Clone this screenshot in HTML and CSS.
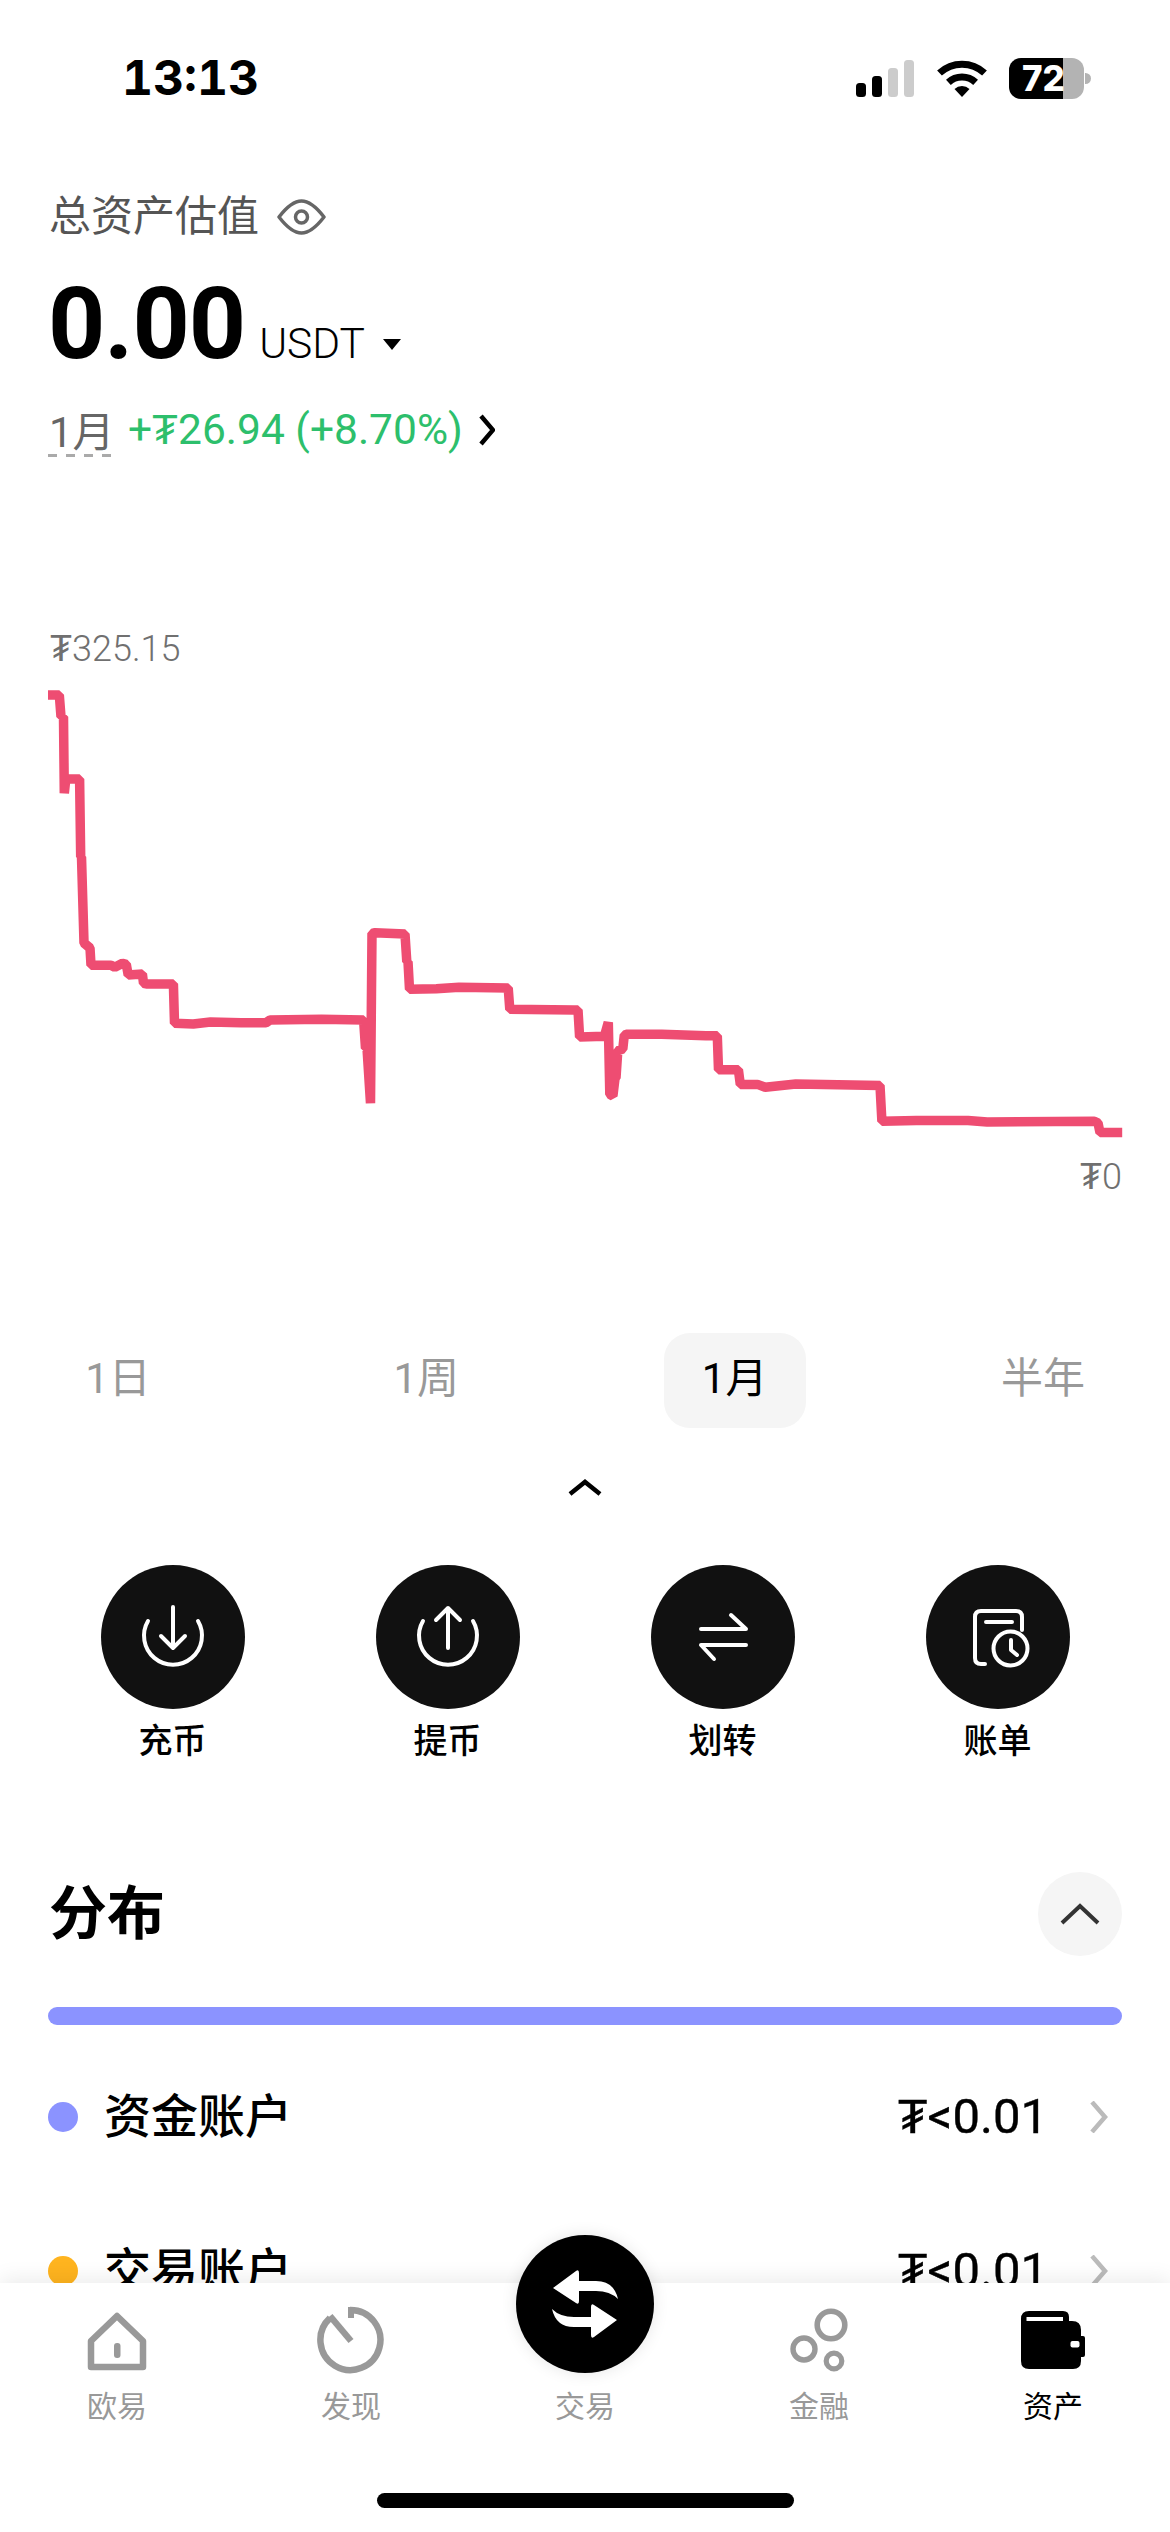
FILE: index.html
```html
<!DOCTYPE html>
<html lang="zh">
<head>
<meta charset="utf-8">
<title>资产</title>
<link rel="stylesheet" href="styles.css">
</head>
<body>
<div class="phone">
  <header class="status">
    <span class="time">13:13</span>
    <div class="status-icons">
      <svg class="signal" width="58" height="37" viewBox="856 59 58 37"><rect x="856" y="82" width="10" height="14" rx="3.5" fill="#000"/><rect x="872" y="75" width="10" height="21" rx="3.5" fill="#000"/><rect x="888" y="67" width="10" height="29" rx="3.5" fill="#ccc"/><rect x="904" y="59" width="10" height="37" rx="3.5" fill="#ccc"/></svg>
      <svg class="wifi" width="50" height="37" viewBox="937 59 50 37"><path d="M939.5 72A33 33 0 0 1 984.5 72M948.4 81.4A20 20 0 0 1 975.6 81.4" fill="none" stroke="#000" stroke-width="7"/><path d="M962 96L954.5 88A11 11 0 0 1 969.5 88Z" fill="#000"/></svg>
      <div class="battery"><span class="battery-level">72</span><i class="battery-nub"></i></div>
    </div>
  </header>

  <section class="summary">
    <div class="total-label">
      <span>总资产估值</span>
      <svg width="50" height="38" viewBox="276 200 50 38"><path d="M278 219C288 206 295 203 300.5 203C306 203 313 206 323 219C313 232 306 235 300.5 235C295 235 288 232 278 219Z" fill="none" stroke="#666" stroke-width="3.5" stroke-linejoin="round"/><circle cx="300.5" cy="219" r="6" fill="none" stroke="#666" stroke-width="3.5"/></svg>
    </div>
    <div class="amount">
      <span class="amount-value">0.00</span>
      <span class="amount-unit">USDT</span>
      <i class="caret"></i>
    </div>
    <div class="change">
      <span class="change-period">1月</span>
      <span class="change-value">+₮26.94 (+8.70%)</span>
      <svg width="16" height="32" viewBox="478 418 16 32"><path d="M480 420L492 434L480 448" fill="none" stroke="#000" stroke-width="4.5"/></svg>
    </div>
  </section>

  <section class="chart">
    <div class="chart-max">₮325.15</div>
    <svg class="chart-line" width="1170" height="480" viewBox="0 672 1170 480"><polyline fill="none" stroke="#ee4d72" stroke-width="9.5" stroke-linejoin="bevel" points="48,695 59.3,695 61,716.7 63.5,716.7 64.3,793.3 65.8,779 79.6,779 80.7,857 81.5,857 84,943 90,948 91,965.3 111,965.3 114.8,967.3 122.5,963.3 126.3,964.3 128.2,975 142.4,974 143.5,983.3 147.3,984 173.4,984 174.5,1023.3 193.3,1024 210.5,1022 241,1022.7 266,1022.7 270,1020 321.5,1019.3 363.6,1020 365.5,1048.3 367,1048.3 370.5,1103.3 372,933.3 375,932.7 405,934 406.8,961.7 408,961.7 409.5,989.3 436.3,988.7 459,987.3 508.2,988 509.8,1009.3 574,1010 578,1010 579.6,1037 604.4,1036.2 608.3,1022.4 609.8,1094.3 612.9,1096 615,1078.5 616,1078 617.8,1050.8 622.8,1049 624.3,1035 627.4,1034.2 661.8,1034.2 705.9,1035.8 717.3,1035.8 718.5,1069.8 738.4,1069.8 740.3,1084.4 757.5,1084.4 765.2,1087.2 795.8,1084 880,1085.6 881.9,1121.2 916.3,1120.4 968,1120.4 987.2,1122 1094.3,1121.2 1098,1123 1100,1132.6 1122.2,1132.6"/></svg>
    <div class="chart-min">₮0</div>
  </section>

  <nav class="periods">
    <span class="period">1日</span>
    <span class="period">1周</span>
    <span class="period is-active">1月</span>
    <span class="period">半年</span>
  </nav>

  <svg class="collapse" width="34" height="17" viewBox="0 0 34 17"><path d="M2 15L17 3L32 15" fill="none" stroke="#000" stroke-width="4.5"/></svg>

  <section class="actions">
    <div class="action">
      <div class="action-circle"><svg width="144" height="144" viewBox="101 1565 144 144"><path d="M148 1621A29 29 0 1 0 198 1621M173 1607V1648M161 1636L173 1648L185 1636" fill="none" stroke="#fff" stroke-width="4" stroke-linecap="round" stroke-linejoin="round"/></svg></div>
      <span class="action-label">充币</span>
    </div>
    <div class="action">
      <div class="action-circle"><svg width="144" height="144" viewBox="376 1565 144 144"><path d="M423 1621A29 29 0 1 0 473 1621M448 1608V1648M436 1620L448 1608L460 1620" fill="none" stroke="#fff" stroke-width="4" stroke-linecap="round" stroke-linejoin="round"/></svg></div>
      <span class="action-label">提币</span>
    </div>
    <div class="action">
      <div class="action-circle"><svg width="144" height="144" viewBox="650 1565 144 144"><path d="M700 1629H745L730 1615M745 1645H700L713 1659" fill="none" stroke="#fff" stroke-width="4" stroke-linecap="round" stroke-linejoin="round"/></svg></div>
      <span class="action-label">划转</span>
    </div>
    <div class="action">
      <div class="action-circle"><svg width="144" height="144" viewBox="925 1565 144 144"><path d="M984 1664H980Q974 1664 974 1658V1617Q974 1611 980 1611H1015Q1021 1611 1021 1617V1630M985 1622H1011M1010 1640V1650L1016 1655" fill="none" stroke="#fff" stroke-width="4" stroke-linecap="round" stroke-linejoin="round"/><circle cx="1009.5" cy="1648.5" r="17" fill="none" stroke="#fff" stroke-width="4"/></svg></div>
      <span class="action-label">账单</span>
    </div>
  </section>

  <section class="distribution">
    <div class="dist-head">
      <h2 class="dist-title">分布</h2>
      <div class="dist-toggle"><svg width="40" height="22" viewBox="0 0 40 22"><path d="M2 20L20 3L38 20" fill="none" stroke="#333" stroke-width="4"/></svg></div>
    </div>
    <div class="dist-bar"></div>
    <div class="dist-row">
      <i class="dot dot-funding"></i>
      <span class="dist-name">资金账户</span>
      <span class="dist-value">₮&lt;0.01</span>
      <svg width="18" height="32" viewBox="0 0 18 32"><path d="M2 1L15 16L2 31" fill="none" stroke="#bbb" stroke-width="4.5"/></svg>
    </div>
    <div class="dist-row">
      <i class="dot dot-trading"></i>
      <span class="dist-name">交易账户</span>
      <span class="dist-value">₮&lt;0.01</span>
      <svg width="18" height="32" viewBox="0 0 18 32"><path d="M2 1L15 16L2 31" fill="none" stroke="#bbb" stroke-width="4.5"/></svg>
    </div>
  </section>

  <footer class="tabbar">
    <div class="tabs">
      <div class="tab">
        <svg width="80" height="72" viewBox="77 2303 80 72"><path d="M117 2316L91 2341V2367H143V2341Z" fill="none" stroke="#999" stroke-width="6.5" stroke-linejoin="round"/><rect x="114" y="2343" width="6.5" height="15" rx="3" fill="#999"/></svg>
        <span>欧易</span>
      </div>
      <div class="tab">
        <svg width="80" height="72" viewBox="311 2303 80 72"><path d="M350 2310A30 30 0 1 1 330 2318" fill="none" stroke="#999" stroke-width="6.5"/><path d="M330 2316L351 2341" fill="none" stroke="#999" stroke-width="6.5"/><path d="M348 2307h6v11h-6z" fill="#999"/></svg>
        <span>发现</span>
      </div>
      <div class="tab">
        <div class="trade-btn"><svg width="138" height="138" viewBox="516 2235 138 138"><path d="M553 2288L576 2271Q579 2269 579 2273V2281H596Q614 2281 618 2299Q610 2291 596 2291H579V2301Q579 2305 576 2303Z" fill="#fff"/><path d="M617 2320L594 2337Q591 2339 591 2335V2327H574Q556 2327 552 2309Q560 2317 574 2317H591V2307Q591 2303 594 2305Z" fill="#fff"/></svg></div>
        <div class="tab-spacer"></div>
        <span>交易</span>
      </div>
      <div class="tab">
        <svg width="80" height="72" viewBox="779 2303 80 72"><circle cx="831" cy="2325" r="13.8" fill="none" stroke="#999" stroke-width="5.6"/><circle cx="804" cy="2349" r="11" fill="none" stroke="#999" stroke-width="5.4"/><circle cx="834" cy="2361" r="7.8" fill="none" stroke="#999" stroke-width="5.2"/></svg>
        <span>金融</span>
      </div>
      <div class="tab is-active">
        <svg width="80" height="72" viewBox="1013 2303 80 72"><path d="M1029 2311H1063Q1069 2311 1069 2317V2321H1072Q1081 2321 1081 2330V2336H1083Q1085 2336 1085 2338V2355Q1085 2357 1083 2357H1081V2361Q1081 2369 1073 2369H1029Q1021 2369 1021 2361V2319Q1021 2311 1029 2311Z" fill="#000"/><rect x="1026.5" y="2317" width="36.5" height="4" fill="#fff"/><rect x="1070.5" y="2341" width="9" height="6.5" rx="2" fill="#fff"/></svg>
        <span>资产</span>
      </div>
    </div>
    <div class="home-indicator"></div>
  </footer>
</div>
</body>
</html>
```
FILE: styles.css
```css
* { box-sizing: border-box; }
html, body { margin: 0; padding: 0; background: #fff; }
body { font-family: Roboto, "Noto Sans CJK SC", sans-serif; color: #000; }
svg { display: block; flex: none; }
i { display: block; }

.phone { position: relative; width: 1170px; height: 2532px; overflow: hidden; background: #fff; }

.status { height: 156px; display: flex; align-items: center; justify-content: space-between; padding: 0 86px 0 122px; }
.time { font-family: Inter, "Liberation Sans", sans-serif; font-weight: 700; font-size: 48px; font-variant-numeric: tabular-nums; line-height: 56px; }
.status-icons { display: flex; align-items: center; }
.wifi { margin-left: 23px; }
.battery { position: relative; margin-left: 22px; width: 75px; height: 41px; border-radius: 12px; background: linear-gradient(to right, #000 54px, #b3b3b3 54px); color: #fff; font-family: Inter, sans-serif; font-weight: 800; font-size: 35px; line-height: 41px; padding-left: 13px; }
.battery-level { display: block; }
.battery-nub { position: absolute; left: 76px; top: 15px; width: 6px; height: 11px; border-radius: 0 6px 6px 0; background: #b3b3b3; }

.summary { padding: 31px 0 0 49px; }
.total-label { height: 60px; display: flex; align-items: center; gap: 18px; font-size: 42px; line-height: 64px; color: #555; }
.amount { margin-top: 27px; height: 100px; display: flex; align-items: baseline; margin-left: -1px; }
.amount-value { font-size: 100px; font-weight: 700; line-height: 100px; letter-spacing: -1px; }
.amount-unit { margin-left: 14px; font-size: 42.5px; line-height: 100px; font-weight: 300; }
.caret { align-self: flex-end; margin: 0 0 24px 18px; width: 0; height: 0; border-left: 9px solid transparent; border-right: 9px solid transparent; border-top: 11px solid #000; }
.change { margin-top: 26px; height: 60px; display: flex; align-items: center; font-size: 42px; line-height: 66px; }
.change-period { position: relative; color: #666; width: 58px; white-space: nowrap; height: 60px; line-height: 66px; }
.change-period::after { content: ""; position: absolute; left: -1px; right: -4px; top: 54px; height: 3px; background: repeating-linear-gradient(to right, #aaa 0 9px, transparent 9px 18px); }
.change-value { margin-left: 21px; color: #2dbf6c; width: 330px; white-space: nowrap; font-size: 42.5px; }
.change svg { margin-left: 21px; }

.chart { margin-top: 166px; }
.chart-max { height: 46px; padding-left: 50px; font-size: 36px; line-height: 46px; color: #707070; font-weight: 300; }
.chart-min { margin-top: 2px; height: 46px; padding-right: 48px; text-align: right; font-size: 36px; line-height: 46px; color: #707070; font-weight: 300; }

.periods { margin-top: 133px; padding: 0 56px 0 47px; display: grid; grid-template-columns: repeat(4, 142px); justify-content: space-between; }
.period { height: 95px; display: flex; align-items: center; justify-content: center; font-size: 42px; line-height: 90px; padding-bottom: 4px; color: #999; border-radius: 26px; }
.period.is-active { color: #000; background: #f5f5f5; }

.collapse { margin: 51px auto 0; }

.actions { margin-top: 69px; padding: 0 35px; display: grid; grid-template-columns: repeat(4, 1fr); }
.action { display: flex; flex-direction: column; align-items: center; }
.action-circle { width: 144px; height: 144px; border-radius: 50%; background: #111; }
.action-label { margin-top: 12px; height: 40px; font-size: 34px; line-height: 40px; font-weight: 500; }

.distribution { margin-top: 111px; padding: 0 48px; }
.dist-head { display: flex; align-items: center; justify-content: space-between; }
.dist-title { margin: 0 0 0 1px; font-size: 58px; line-height: 84px; font-weight: 700; }
.dist-toggle { width: 84px; height: 84px; border-radius: 50%; background: #f5f5f5; display: flex; align-items: center; justify-content: center; }
.dist-bar { margin-top: 51px; height: 18px; border-radius: 9px; background: #8b93ff; }
.dist-row { height: 154px; display: flex; align-items: center; }
.dist-bar + .dist-row { margin-top: 15px; }
.dot { width: 30px; height: 30px; border-radius: 50%; }
.dot-funding { background: #8b93ff; }
.dot-trading { background: #ffb41f; }
.dist-name { margin-left: 26px; font-size: 47px; line-height: 60px; font-weight: 500; }
.dist-value { margin-left: auto; font-size: 49px; line-height: 60px; font-weight: 400; -webkit-text-stroke: 0.4px #000; }
.dist-row svg { margin: 0 14px 0 42px; }

.tabbar { position: absolute; left: 0; right: 0; bottom: 0; height: 249px; background: #fff; box-shadow: 0 -4px 20px rgba(0, 0, 0, 0.08); padding-top: 20px; }
.tabs { display: grid; grid-template-columns: repeat(5, 234px); }
.tab { position: relative; display: flex; flex-direction: column; align-items: center; font-size: 30px; line-height: 40px; color: #999; }
.tab span { margin-top: 12px; height: 40px; }
.tab.is-active { color: #000; }
.tab-spacer { height: 72px; }
.trade-btn { position: absolute; left: 48px; top: -68px; width: 138px; height: 138px; border-radius: 50%; background: #000; box-shadow: 0 0 16px rgba(0, 0, 0, 0.1); }
.home-indicator { margin: 66px auto 0; width: 417px; height: 15px; border-radius: 8px; background: #000; }
```
